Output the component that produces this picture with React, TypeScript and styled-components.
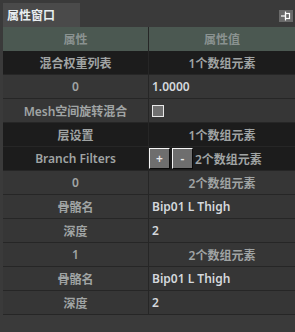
import React from 'react';
import styled, { createGlobalStyle } from 'styled-components';

const Global = createGlobalStyle`
	html, body {
		margin: 0;
		padding: 0;
		background: #3a3a3a;
	}
	body {
		font-family: 'Noto Sans', 'Noto Sans CJK SC', sans-serif;
		font-size: 12px;
	}
`;

const Window = styled.div`
	width: 295px;
	height: 332px;
	background: #3a3a3a;
	display: flex;
	flex-direction: column;
	padding-left: 3px;
	box-sizing: border-box;
	overflow: hidden;
`;

const TitleBar = styled.div`
	height: 27px;
	display: flex;
	align-items: flex-end;
	justify-content: space-between;
`;

const Tab = styled.div`
	width: 77px;
	height: 24px;
	background: #4a4a4a;
	color: #e8eef0;
	font-weight: 600;
	font-size: 12px;
	display: flex;
	align-items: center;
	padding-left: 4px;
	box-sizing: border-box;
`;

const PinButton = styled.div`
	width: 14px;
	height: 12px;
	background: #6a6a6a;
	margin: 0 2px 5px 0;
	display: flex;
	align-items: center;
	justify-content: center;
`;

const Table = styled.div`
	display: flex;
	flex-direction: column;
`;

const Row = styled.div<{ $tone: 'head' | 'dark' | 'normal' }>`
	display: grid;
	grid-template-columns: 145px 1fr;
	height: 24px;
	background: ${(p) => (p.$tone === 'head' ? '#4b5851' : p.$tone === 'dark' ? '#1c1c1c' : '#363636')};
	border-bottom: 1px solid #262626;
	box-sizing: border-box;
	${(p) => (p.$tone === 'head' ? 'border-bottom: none;' : '')}
`;

const Cell = styled.div<{ $align?: 'center' | 'left'; $color?: string }>`
	display: flex;
	align-items: center;
	justify-content: ${(p) => (p.$align === 'left' ? 'flex-start' : 'center')};
	padding-left: ${(p) => (p.$align === 'left' ? '3px' : '0')};
	color: ${(p) => p.$color || '#a4a8a8'};
	font-weight: 600;
	white-space: nowrap;
	overflow: hidden;
	& + & {
		border-left: 1px solid #262626;
	}
`;

const Check = styled.div`
	width: 10px;
	height: 10px;
	background: #707070;
	border: 1px solid #e8e8e8;
`;

const SmallButton = styled.div`
	width: 21px;
	height: 21px;
	background: #6e6e6e;
	border-top: 1px solid #f4f4f4;
	border-left: 1px solid #f4f4f4;
	border-right: 1px solid #0a0a0a;
	border-bottom: 1px solid #0a0a0a;
	box-sizing: border-box;
	color: #e8e8e8;
	display: flex;
	align-items: center;
	justify-content: center;
	font-size: 12px;
	margin-right: 2px;
`;

const ButtonGroup = styled.div`
	display: flex;
	align-items: center;
	height: 100%;
`;

const Filler = styled.div`
	flex: 1;
`;

const LABEL = '#a0a4a4';
const VALUE = '#d4d8dc';

export default function App() {
	return (
		<Window>
			<Global />
			<TitleBar>
				<Tab>属性窗口</Tab>
				<PinButton>
					<svg width="12" height="10" viewBox="0 0 12 10">
						<rect x="5.5" y="2.5" width="4" height="5" fill="none" stroke="#fff" strokeWidth="1.2" />
						<line x1="1" y1="5" x2="5.5" y2="5" stroke="#fff" strokeWidth="1.2" />
						<line x1="5.5" y1="0.5" x2="5.5" y2="9.5" stroke="#fff" strokeWidth="1.2" />
					</svg>
				</PinButton>
			</TitleBar>
			<Table>
				<Row $tone="head">
					<Cell $color="#8a9290">属性</Cell>
					<Cell $color="#8a9290">属性值</Cell>
				</Row>
				<Row $tone="dark">
					<Cell $color={LABEL}>混合权重列表</Cell>
					<Cell $color={LABEL}>1个数组元素</Cell>
				</Row>
				<Row $tone="normal">
					<Cell $color={LABEL}>0</Cell>
					<Cell $align="left" $color={VALUE}>1.0000</Cell>
				</Row>
				<Row $tone="normal">
					<Cell $color={LABEL}>Mesh空间旋转混合</Cell>
					<Cell $align="left">
						<Check />
					</Cell>
				</Row>
				<Row $tone="dark">
					<Cell $color={LABEL}>层设置</Cell>
					<Cell $color={LABEL}>1个数组元素</Cell>
				</Row>
				<Row $tone="dark">
					<Cell $color={LABEL}>Branch Filters</Cell>
					<Cell $align="left" $color={LABEL} style={{ paddingLeft: 0 }}>
						<ButtonGroup>
							<SmallButton>+</SmallButton>
							<SmallButton>-</SmallButton>
						</ButtonGroup>
						2个数组元素
					</Cell>
				</Row>
				<Row $tone="normal">
					<Cell $color={LABEL}>0</Cell>
					<Cell $color={LABEL}>2个数组元素</Cell>
				</Row>
				<Row $tone="normal">
					<Cell $color={LABEL}>骨骼名</Cell>
					<Cell $align="left" $color={VALUE}>Bip01 L Thigh</Cell>
				</Row>
				<Row $tone="normal">
					<Cell $color={LABEL}>深度</Cell>
					<Cell $align="left" $color={VALUE}>2</Cell>
				</Row>
				<Row $tone="normal">
					<Cell $color={LABEL}>1</Cell>
					<Cell $color={LABEL}>2个数组元素</Cell>
				</Row>
				<Row $tone="normal">
					<Cell $color={LABEL}>骨骼名</Cell>
					<Cell $align="left" $color={VALUE}>Bip01 L Thigh</Cell>
				</Row>
				<Row $tone="normal">
					<Cell $color={LABEL}>深度</Cell>
					<Cell $align="left" $color={VALUE}>2</Cell>
				</Row>
			</Table>
			<Filler />
		</Window>
	);
}
